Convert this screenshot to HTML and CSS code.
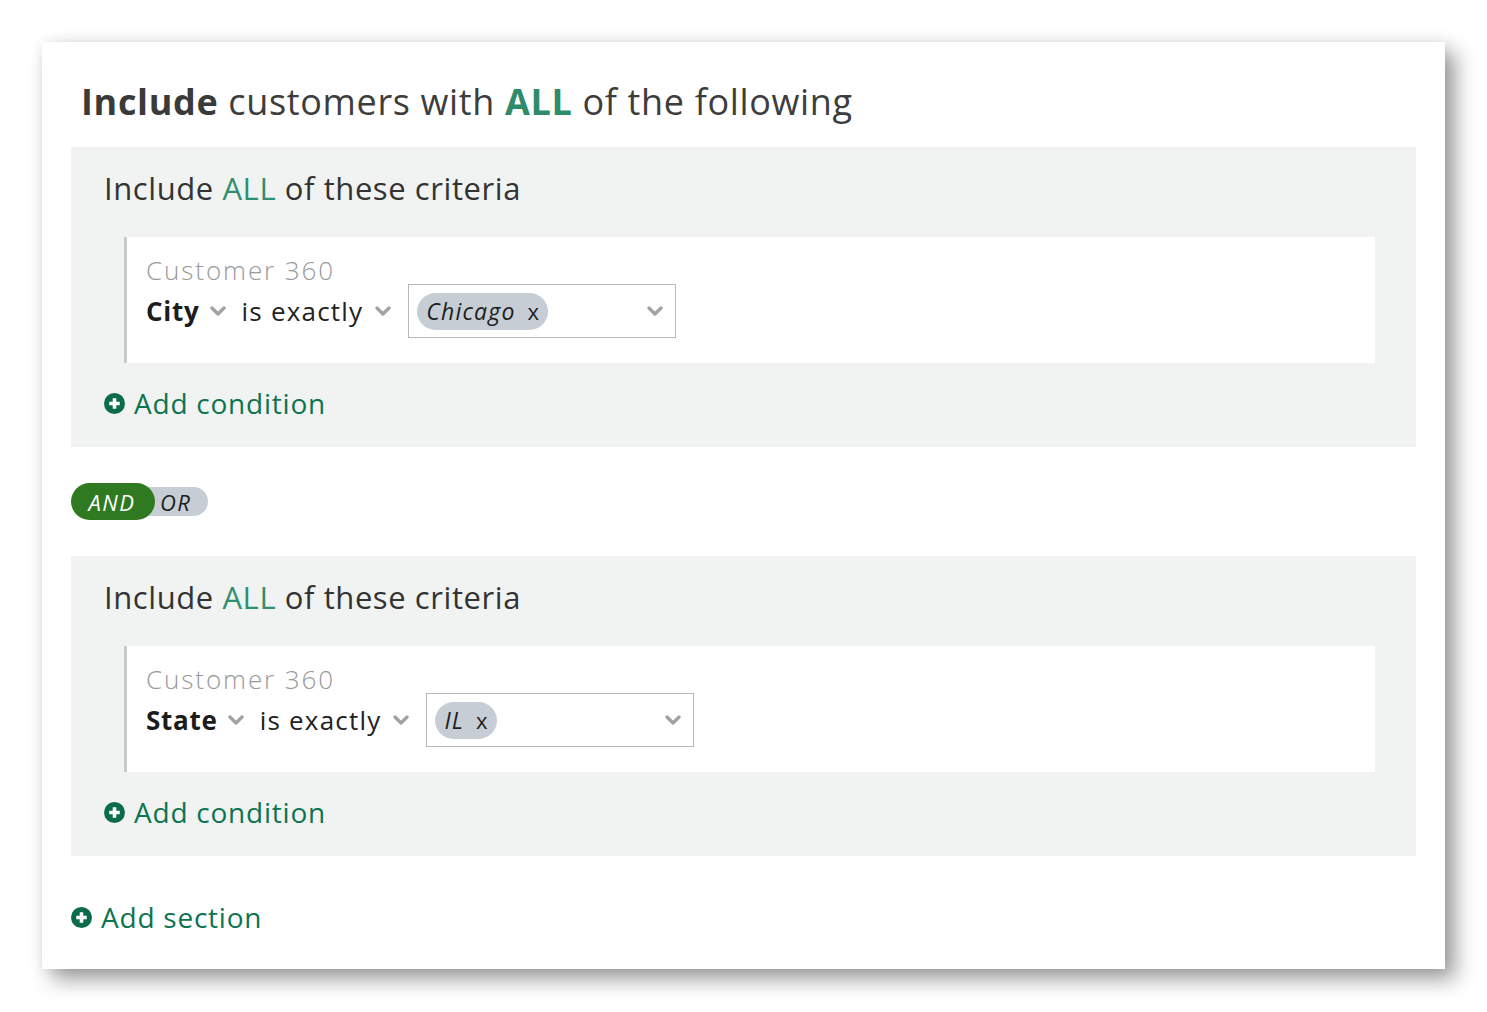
FILE: index.html
```html
<!DOCTYPE html>
<html lang="en">
<head>
<meta charset="utf-8">
<title>Audience builder</title>
<link rel="stylesheet" href="styles.css">
</head>
<body>
<div class="card">
  <h1 class="title"><b>Include</b> customers with <span class="all-strong">ALL</span> of the following</h1>

  <section class="group">
    <h2 class="group-title">Include <span class="all">ALL</span> of these criteria</h2>
    <div class="cond">
      <div class="source">Customer 360</div>
      <div class="row">
        <span class="field">City</span>
        <svg class="chev" viewBox="0 0 16 10"><polyline points="2,2 8,8 14,2"/></svg>
        <span class="op">is exactly</span>
        <svg class="chev chev-op" viewBox="0 0 16 10"><polyline points="2,2 8,8 14,2"/></svg>
        <div class="select">
          <span class="chip"><span class="chip-text">Chicago</span><span class="chip-x">x</span></span>
          <svg class="chev chev-sel" viewBox="0 0 16 10"><polyline points="2,2 8,8 14,2"/></svg>
        </div>
      </div>
    </div>
    <div class="add add-cond">
      <svg class="plus" viewBox="0 0 20 20"><circle cx="10" cy="10" r="10"/><path d="M10 5v10M5 10h10"/></svg>
      <span>Add condition</span>
    </div>
  </section>

  <div class="toggle">
    <span class="and">AND</span>
    <span class="or">OR</span>
  </div>

  <section class="group">
    <h2 class="group-title">Include <span class="all">ALL</span> of these criteria</h2>
    <div class="cond">
      <div class="source">Customer 360</div>
      <div class="row">
        <span class="field">State</span>
        <svg class="chev" viewBox="0 0 16 10"><polyline points="2,2 8,8 14,2"/></svg>
        <span class="op">is exactly</span>
        <svg class="chev chev-op" viewBox="0 0 16 10"><polyline points="2,2 8,8 14,2"/></svg>
        <div class="select">
          <span class="chip"><span class="chip-text">IL</span><span class="chip-x">x</span></span>
          <svg class="chev chev-sel" viewBox="0 0 16 10"><polyline points="2,2 8,8 14,2"/></svg>
        </div>
      </div>
    </div>
    <div class="add add-cond">
      <svg class="plus" viewBox="0 0 20 20"><circle cx="10" cy="10" r="10"/><path d="M10 5v10M5 10h10"/></svg>
      <span>Add condition</span>
    </div>
  </section>

  <div class="add add-section">
    <svg class="plus" viewBox="0 0 20 20"><circle cx="10" cy="10" r="10"/><path d="M10 5v10M5 10h10"/></svg>
    <span>Add section</span>
  </div>
</div>
</body>
</html>
```

FILE: styles.css
```css
* { box-sizing: border-box; }

html, body { min-height: 1012px; }

body {
  margin: 0;
  padding: 42px 0 43px 42px;
  background: #ffffff;
  font-family: "Open Sans", "Liberation Sans", sans-serif;
  color: #333;
}

.card {
  width: 1403px;
  height: 927px;
  background: #fff;
  padding: 38px 29px 0 29px;
  box-shadow: 10px 10px 20px rgba(0, 0, 0, 0.4), 0 0 12px rgba(0, 0, 0, 0.06);
}

.title {
  margin: 0 0 23px 10px;
  font-size: 36px;
  line-height: 44px;
  font-weight: 400;
  color: #3d3d3d;
  letter-spacing: 0.65px;
}
.title b { font-weight: 700; color: #3a3a3a; }
.all-strong { color: #2f8c6a; font-weight: 700; }

.group {
  background: #f1f3f2;
  padding: 21px 0 24px 0;
}

.group-title {
  margin: 0 0 29px 33px;
  font-size: 31px;
  line-height: 40px;
  font-weight: 400;
  color: #333;
  letter-spacing: 0.58px;
}
.all { color: #2e9070; }

.cond {
  margin: 0 41px 0 53px;
  background: #fff;
  border-left: 3px solid #c9c9c9;
  padding: 19px 19px 25px 19px;
}

.source {
  font-size: 26px;
  line-height: 28px;
  font-weight: 300;
  color: #9a9a9a;
  letter-spacing: 1.9px;
}

.row {
  display: flex;
  align-items: center;
  height: 54px;
}

.field {
  font-size: 26px;
  font-weight: 700;
  color: #1c1c1c;
  letter-spacing: 0.75px;
}
.op {
  font-size: 26px;
  font-weight: 400;
  color: #222;
  letter-spacing: 1.2px;
}

.chev {
  width: 16px;
  height: 10px;
  fill: none;
  stroke: #a3a3a3;
  stroke-width: 3.4;
  stroke-linecap: round;
  stroke-linejoin: round;
  margin: 0 16px 0 10px;
}
.chev-op { margin-right: 17px; margin-left: 12px; }

.select {
  width: 268px;
  height: 54px;
  border: 1px solid #b8b8b8;
  background: #fff;
  display: flex;
  align-items: center;
  padding: 0 12px 0 8px;
}
.chev-sel { margin: 0 0 0 auto; }

.chip {
  display: inline-flex;
  align-items: center;
  height: 37px;
  padding: 0 9px 0 9px;
  background: #c6cdd4;
  border-radius: 19px;
  color: #1d1d1d;
  font-size: 23px;
}
.chip-text { font-style: italic; letter-spacing: 1.2px; }
.chip-x { margin-left: 12px; font-size: 22px; }

.add {
  display: flex;
  align-items: center;
  height: 40px;
  color: #0d7450;
  font-size: 28px;
  letter-spacing: 0.77px;
}
.add-cond {
  margin: 20px 0 0 33px;
}
.add .plus {
  width: 21px;
  height: 21px;
  margin-right: 9px;
  flex: none;
}
.plus circle { fill: #0b6b4b; }
.plus path { stroke: #fff; stroke-width: 3.4; }

.toggle {
  display: flex;
  align-items: center;
  height: 37px;
  margin: 36px 0 36px 0;
}
.and {
  position: relative;
  z-index: 1;
  width: 84px;
  height: 37px;
  border-radius: 19px;
  background: #2f7a20;
  color: #fff;
  font-style: italic;
  font-size: 22px;
  letter-spacing: 1.5px;
  display: flex;
  align-items: center;
  justify-content: center;
  padding-right: 2px;
}
.or {
  margin-left: -16px;
  width: 69px;
  height: 29px;
  border-radius: 0 15px 15px 0;
  background: #c6cdd4;
  color: #1d1d1d;
  font-style: italic;
  font-size: 22px;
  letter-spacing: 1.5px;
  display: flex;
  align-items: center;
  padding-left: 21px;
}

.add-section {
  margin: 41px 0 0 0;
}
```
